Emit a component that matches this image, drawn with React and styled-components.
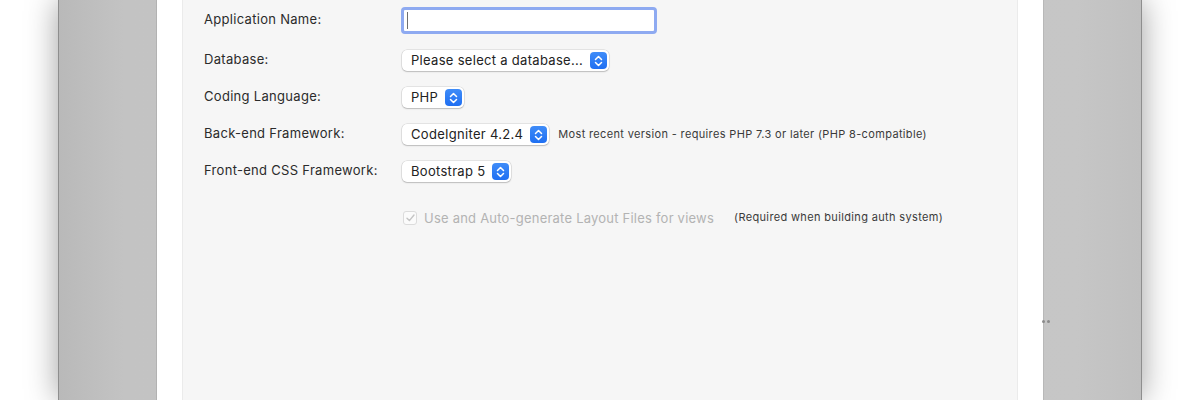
import React from "react";
import styled, { createGlobalStyle } from "styled-components";

const GlobalStyle = createGlobalStyle`
  html, body {
    margin: 0;
    padding: 0;
    background: #ffffff;
  }
  body {
    font-family: Inter, "Noto Sans", "Liberation Sans", sans-serif;
    -webkit-font-smoothing: antialiased;
  }
`;

const Stage = styled.div`
  height: 400px;
  overflow: hidden;
  padding: 0 58px;
`;

const Window = styled.div`
  height: 400px;
  display: flex;
  justify-content: center;
  align-items: stretch;
  background: linear-gradient(90deg, #b9b9b9 0%, #c3c3c3 6%, #c4c4c4 50%, #c6c6c6 94%, #c0c0c0 100%);
  border-left: 1px solid #8e8e8e;
  border-right: 1px solid #8e8e8e;
  box-shadow: 0 0 30px rgba(0, 0, 0, 0.38);
  position: relative;
`;

const Sheet = styled.div`
  width: 886px;
  background: #ffffff;
  padding: 0 25px;
  box-sizing: border-box;
  display: flex;
  box-shadow: -1px 0 0 #b2b2b2, 1px 0 0 #b8b8b8;
`;

const Panel = styled.div`
  flex: 1;
  background: #f6f6f6;
  border-left: 1px solid #ebebeb;
  border-right: 1px solid #ebebeb;
  padding: 7px 20px 0 21px;
  display: flex;
  flex-direction: column;
  gap: 16px;
`;

const Row = styled.div`
  display: flex;
  align-items: center;
  height: ${(p) => p.$h || 21}px;
  margin-top: ${(p) => p.$mt || 0}px;
`;

const Label = styled.div`
  width: 197px;
  flex-shrink: 0;
  font-size: 13px;
  color: #2b2b2b;
  letter-spacing: 0.3px;
  padding-bottom: 4px;
`;

const FocusRing = styled.div`
  width: 256px;
  height: 27px;
  box-sizing: border-box;
  border: 3px solid #8eaaf1;
  border-radius: 4px;
  background: #ffffff;
  display: flex;
  align-items: center;
  padding-left: 3px;
`;

const Caret = styled.span`
  width: 1px;
  height: 17px;
  background: #6f6f6f;
`;

const Select = styled.div`
  height: 21px;
  box-sizing: border-box;
  display: inline-flex;
  align-items: center;
  gap: 7px;
  margin-left: 1px;
  padding: 0 2px 0 9px;
  background: #ffffff;
  border-radius: 5px;
  box-shadow: 0 0 0 0.5px rgba(0, 0, 0, 0.14), 0 1px 1.5px rgba(0, 0, 0, 0.18);
  font-size: 13px;
  color: #222222;
  letter-spacing: 0.3px;
`;

const SelectText = styled.span`
  padding-bottom: 2px;
`;

const Stepper = styled.span`
  width: 17px;
  height: 17px;
  border-radius: 4px;
  background: linear-gradient(180deg, #3f8cf8 0%, #1f6ff2 100%);
  display: flex;
  align-items: center;
  justify-content: center;
`;

const Hint = styled.span`
  font-size: 11px;
  color: #3a3a3a;
  margin-left: ${(p) => p.$ml || 9}px;
  letter-spacing: 0.35px;
  padding-bottom: 2px;
`;

const CheckLabel = styled.label`
  display: flex;
  align-items: center;
  gap: 7px;
  margin-left: 199px;
  font-size: 13px;
  color: #b3b3b3;
  letter-spacing: 0.22px;
`;

const CheckBox = styled.span`
  width: 14px;
  height: 14px;
  box-sizing: border-box;
  border: 1px solid #dcdcdc;
  border-radius: 3px;
  background: #fbfbfb;
  display: flex;
  align-items: center;
  justify-content: center;
`;

const Grip = styled.div`
  position: absolute;
  right: 91px;
  top: 320px;
  display: flex;
  gap: 2px;
  span {
    width: 3px;
    height: 3px;
    border-radius: 50%;
    background: #8a8a8a;
  }
`;

const StepperIcon = () => (
  <Stepper>
    <svg width="9" height="12" viewBox="0 0 9 12" fill="none">
      <path d="M1.5 4.5 L4.5 1.5 L7.5 4.5" stroke="#fff" strokeWidth="1.5" strokeLinecap="round" strokeLinejoin="round" />
      <path d="M1.5 7.5 L4.5 10.5 L7.5 7.5" stroke="#fff" strokeWidth="1.5" strokeLinecap="round" strokeLinejoin="round" />
    </svg>
  </Stepper>
);

const PopUp = ({ children }) => (
  <Select>
    <SelectText>{children}</SelectText>
    <StepperIcon />
  </Select>
);

export default function App() {
  return (
    <>
      <GlobalStyle />
      <Stage>
        <Window>
          <Sheet>
            <Panel>
              <Row $h={27}>
                <Label>Application Name:</Label>
                <FocusRing>
                  <Caret />
                </FocusRing>
              </Row>
              <Row>
                <Label>Database:</Label>
                <PopUp>Please select a database...</PopUp>
              </Row>
              <Row>
                <Label>Coding Language:</Label>
                <PopUp>PHP</PopUp>
              </Row>
              <Row>
                <Label>Back-end Framework:</Label>
                <PopUp>CodeIgniter 4.2.4</PopUp>
                <Hint>Most recent version - requires PHP 7.3 or later (PHP 8-compatible)</Hint>
              </Row>
              <Row>
                <Label>Front-end CSS Framework:</Label>
                <PopUp>Bootstrap 5</PopUp>
              </Row>
              <Row $h={15} $mt={12}>
                <CheckLabel>
                  <CheckBox>
                    <svg width="9" height="8" viewBox="0 0 9 8" fill="none">
                      <path d="M1 4.2 L3.4 6.6 L8 1" stroke="#c4c4c4" strokeWidth="1.4" strokeLinecap="round" strokeLinejoin="round" />
                    </svg>
                  </CheckBox>
                  Use and Auto-generate Layout Files for views
                </CheckLabel>
                <Hint $ml={20}>(Required when building auth system)</Hint>
              </Row>
            </Panel>
          </Sheet>
          <Grip>
            <span />
            <span />
          </Grip>
        </Window>
      </Stage>
    </>
  );
}
